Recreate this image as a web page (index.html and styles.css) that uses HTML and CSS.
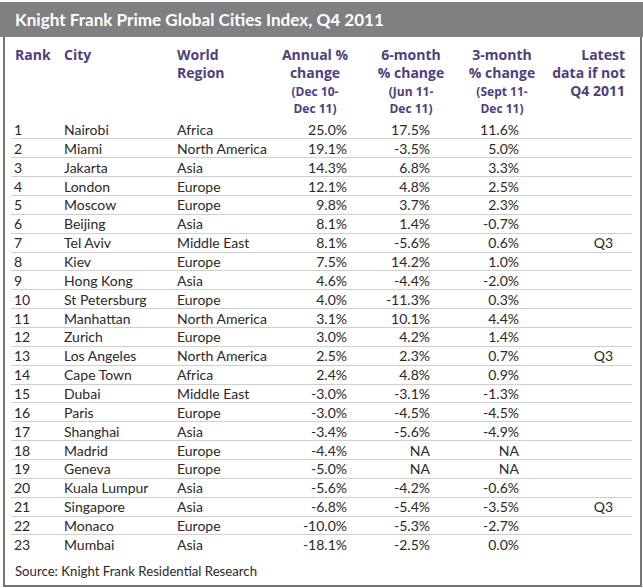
FILE: index.html
```html
<!DOCTYPE html>
<html>
<head>
<meta charset="utf-8">
<link rel="stylesheet" href="styles.css">
</head>
<body>
<div class="page">
  <div class="title">Knight Frank Prime Global Cities Index, Q4 2011</div>
  <div class="panel">
    <div class="head">
      <div class="h rank">Rank</div>
      <div class="h">City</div>
      <div class="h"><div>World</div><div>Region</div></div>
      <div class="h ctr"><div>Annual %</div><div>change</div><div class="sm"><div>(Dec 10-</div><div>Dec 11)</div></div></div>
      <div class="h ctr"><div>6-month</div><div>% change</div><div class="sm"><div>(Jun 11-</div><div>Dec 11)</div></div></div>
      <div class="h ctr"><div>3-month</div><div>% change</div><div class="sm"><div>(Sept 11-</div><div>Dec 11)</div></div></div>
      <div class="h rgt"><div>Latest</div><div>data if not</div><div>Q4 2011</div></div>
    </div>
    <div class="rows">
      <div class="row"><span class="c rank">1</span><span class="c">Nairobi</span><span class="c">Africa</span><span class="c num">25.0%</span><span class="c num">17.5%</span><span class="c num">11.6%</span><span class="c q"></span></div>
      <div class="row"><span class="c rank">2</span><span class="c">Miami</span><span class="c">North America</span><span class="c num">19.1%</span><span class="c num">-3.5%</span><span class="c num">5.0%</span><span class="c q"></span></div>
      <div class="row"><span class="c rank">3</span><span class="c">Jakarta</span><span class="c">Asia</span><span class="c num">14.3%</span><span class="c num">6.8%</span><span class="c num">3.3%</span><span class="c q"></span></div>
      <div class="row"><span class="c rank">4</span><span class="c">London</span><span class="c">Europe</span><span class="c num">12.1%</span><span class="c num">4.8%</span><span class="c num">2.5%</span><span class="c q"></span></div>
      <div class="row"><span class="c rank">5</span><span class="c">Moscow</span><span class="c">Europe</span><span class="c num">9.8%</span><span class="c num">3.7%</span><span class="c num">2.3%</span><span class="c q"></span></div>
      <div class="row"><span class="c rank">6</span><span class="c">Beijing</span><span class="c">Asia</span><span class="c num">8.1%</span><span class="c num">1.4%</span><span class="c num">-0.7%</span><span class="c q"></span></div>
      <div class="row"><span class="c rank">7</span><span class="c">Tel Aviv</span><span class="c">Middle East</span><span class="c num">8.1%</span><span class="c num">-5.6%</span><span class="c num">0.6%</span><span class="c q">Q3</span></div>
      <div class="row"><span class="c rank">8</span><span class="c">Kiev</span><span class="c">Europe</span><span class="c num">7.5%</span><span class="c num">14.2%</span><span class="c num">1.0%</span><span class="c q"></span></div>
      <div class="row"><span class="c rank">9</span><span class="c">Hong Kong</span><span class="c">Asia</span><span class="c num">4.6%</span><span class="c num">-4.4%</span><span class="c num">-2.0%</span><span class="c q"></span></div>
      <div class="row"><span class="c rank">10</span><span class="c">St Petersburg</span><span class="c">Europe</span><span class="c num">4.0%</span><span class="c num">-11.3%</span><span class="c num">0.3%</span><span class="c q"></span></div>
      <div class="row"><span class="c rank">11</span><span class="c">Manhattan</span><span class="c">North America</span><span class="c num">3.1%</span><span class="c num">10.1%</span><span class="c num">4.4%</span><span class="c q"></span></div>
      <div class="row"><span class="c rank">12</span><span class="c">Zurich</span><span class="c">Europe</span><span class="c num">3.0%</span><span class="c num">4.2%</span><span class="c num">1.4%</span><span class="c q"></span></div>
      <div class="row"><span class="c rank">13</span><span class="c">Los Angeles</span><span class="c">North America</span><span class="c num">2.5%</span><span class="c num">2.3%</span><span class="c num">0.7%</span><span class="c q">Q3</span></div>
      <div class="row"><span class="c rank">14</span><span class="c">Cape Town</span><span class="c">Africa</span><span class="c num">2.4%</span><span class="c num">4.8%</span><span class="c num">0.9%</span><span class="c q"></span></div>
      <div class="row"><span class="c rank">15</span><span class="c">Dubai</span><span class="c">Middle East</span><span class="c num">-3.0%</span><span class="c num">-3.1%</span><span class="c num">-1.3%</span><span class="c q"></span></div>
      <div class="row"><span class="c rank">16</span><span class="c">Paris</span><span class="c">Europe</span><span class="c num">-3.0%</span><span class="c num">-4.5%</span><span class="c num">-4.5%</span><span class="c q"></span></div>
      <div class="row"><span class="c rank">17</span><span class="c">Shanghai</span><span class="c">Asia</span><span class="c num">-3.4%</span><span class="c num">-5.6%</span><span class="c num">-4.9%</span><span class="c q"></span></div>
      <div class="row"><span class="c rank">18</span><span class="c">Madrid</span><span class="c">Europe</span><span class="c num">-4.4%</span><span class="c num">NA</span><span class="c num">NA</span><span class="c q"></span></div>
      <div class="row"><span class="c rank">19</span><span class="c">Geneva</span><span class="c">Europe</span><span class="c num">-5.0%</span><span class="c num">NA</span><span class="c num">NA</span><span class="c q"></span></div>
      <div class="row"><span class="c rank">20</span><span class="c">Kuala Lumpur</span><span class="c">Asia</span><span class="c num">-5.6%</span><span class="c num">-4.2%</span><span class="c num">-0.6%</span><span class="c q"></span></div>
      <div class="row"><span class="c rank">21</span><span class="c">Singapore</span><span class="c">Asia</span><span class="c num">-6.8%</span><span class="c num">-5.4%</span><span class="c num">-3.5%</span><span class="c q">Q3</span></div>
      <div class="row"><span class="c rank">22</span><span class="c">Monaco</span><span class="c">Europe</span><span class="c num">-10.0%</span><span class="c num">-5.3%</span><span class="c num">-2.7%</span><span class="c q"></span></div>
      <div class="row"><span class="c rank">23</span><span class="c">Mumbai</span><span class="c">Asia</span><span class="c num">-18.1%</span><span class="c num">-2.5%</span><span class="c num">0.0%</span><span class="c q"></span></div>
    </div>
    <div class="source">Source: Knight Frank Residential Research</div>
  </div>
</div>
</body>
</html>
```

FILE: styles.css
```css
html, body {
  margin: 0;
  padding: 0;
  background: #ffffff;
}

.page {
  width: 643px;
  padding-top: 2px;
  font-family: Lato, "Open Sans", sans-serif;
  color: #2b2829;
}

.title {
  height: 35px;
  line-height: 35px;
  background: #808083;
  color: #ffffff;
  font-family: Lato, sans-serif;
  font-weight: 700;
  font-size: 17.1px;
  padding-left: 15px;
}

.panel {
  margin: 0 1px 0 3px;
  border: 2px solid #747474;
  border-top: 0;
  padding: 9px 8px 5px 6px;
}

.head {
  display: grid;
  grid-template-columns: 53px 113px 93px 90px 102px 80px 83px;
  font-family: "Open Sans", sans-serif;
  font-weight: 700;
  font-size: 14px;
  line-height: 18px;
  color: #4e3f7e;
  white-space: nowrap;
}

.h.rank {
  padding-left: 4px;
}

.h.ctr {
  text-align: center;
}

.h.rgt {
  text-align: right;
}

.sm {
  font-size: 12px;
  line-height: 17px;
  padding-top: 1px;
}

.rows {
  margin-top: 2.5px;
}

.row {
  display: grid;
  grid-template-columns: 53px 113px 93px 77px 83px 89px 113px;
  align-items: center;
  box-sizing: border-box;
  height: 18.86px;
  border-top: 1px solid #cfcfcf;
  font-size: 14px;
  line-height: 17px;
  white-space: nowrap;
}

.row:first-child {
  border-top-color: transparent;
}

.c.rank {
  padding-left: 3px;
}

.c.num {
  text-align: right;
}

.c.q {
  text-align: right;
  padding-right: 19px;
}

.source {
  margin-top: 8.5px;
  padding-left: 4px;
  font-size: 13.2px;
  line-height: 18px;
}
```
